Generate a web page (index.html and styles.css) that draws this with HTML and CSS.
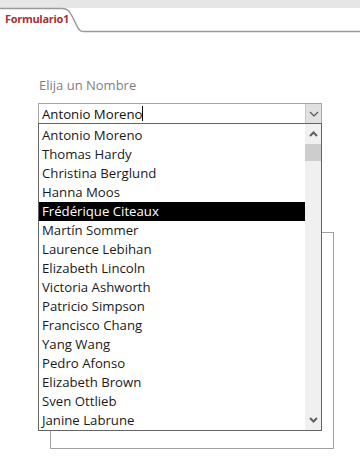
FILE: index.html
```html
<!DOCTYPE html>
<html>
<head>
  <title>Formulario1</title>
  <link rel="stylesheet" href="styles.css">
</head>
<body>
  <div class="tabstrip">
    <svg class="tab-shape" width="360" height="33" viewBox="0 0 360 33">
      <path d="M0 8 H360 V0 H0 Z" fill="#e6e6e6"/>
      <path d="M0 8.5 H62 C68 8.5 70 12 72 16 L78 28 C80 31 81 31.5 84 31.5 H360" fill="none" stroke="#9a9a9a" stroke-width="1.5"/>
    </svg>
    <span class="tab-label">Formulario1</span>
  </div>

  <div class="form">
    <div class="field-label">Elija un Nombre</div>

    <div class="combo">
      <div class="combo-box">
        <span class="combo-text">Antonio Moreno</span><span class="caret"></span>
        <span class="combo-btn">
          <svg width="10" height="6" viewBox="0 0 10 6"><path d="M1 1 L5 5 L9 1" fill="none" stroke="#555" stroke-width="1.2"/></svg>
        </span>
      </div>

      <div class="dropdown">
        <ul class="options">
          <li>Antonio Moreno</li>
          <li>Thomas Hardy</li>
          <li>Christina Berglund</li>
          <li>Hanna Moos</li>
          <li class="selected">Frédérique Citeaux</li>
          <li>Martín Sommer</li>
          <li>Laurence Lebihan</li>
          <li>Elizabeth Lincoln</li>
          <li>Victoria Ashworth</li>
          <li>Patricio Simpson</li>
          <li>Francisco Chang</li>
          <li>Yang Wang</li>
          <li>Pedro Afonso</li>
          <li>Elizabeth Brown</li>
          <li>Sven Ottlieb</li>
          <li>Janine Labrune</li>
        </ul>
        <div class="scrollbar">
          <span class="arrow">
            <svg width="9" height="6" viewBox="0 0 9 6"><path d="M1 5 L4.5 1.5 L8 5" fill="none" stroke="#606060" stroke-width="2"/></svg>
          </span>
          <span class="thumb"></span>
          <span class="track"></span>
          <span class="arrow">
            <svg width="9" height="6" viewBox="0 0 9 6"><path d="M1 1 L4.5 4.5 L8 1" fill="none" stroke="#606060" stroke-width="2"/></svg>
          </span>
        </div>
      </div>
    </div>

    <div class="subform"></div>
  </div>
</body>
</html>
```

FILE: styles.css
```css
body { margin: 0; background: #fff; font-family: "Open Sans", "Noto Sans", sans-serif; color: #222; }

.tabstrip { position: relative; height: 33px; }
.tab-shape { display: block; }
.tab-label { position: absolute; left: 5px; top: 11px; font-size: 11px; font-weight: bold; color: #a8302f; letter-spacing: -0.3px; }

.form { padding: 43px 0 0 38px; }
.field-label { margin-left: 1px; font-size: 13px; color: #7f7f7f; height: 27px; }

.combo { position: relative; width: 284px; }
.combo-box { height: 19px; border: 1px solid #a6a6a6; display: flex; align-items: center; font-size: 13.2px; }
.combo-text { padding-left: 3px; color: #111; }
.caret { width: 1px; height: 15px; background: #000; }
.combo-btn { margin-left: auto; width: 15px; height: 19px; background: #e1e1e1; border-left: 1px solid #c8c8c8; display: flex; align-items: center; justify-content: center; }

.dropdown { position: absolute; left: 0; top: 20px; width: 282px; height: 306px; border: 1px solid #646464; background: #fff; display: flex; z-index: 2; }
.options { list-style: none; margin: 0; padding: 2px 0 0 0; flex: 1; }
.options li { height: 19px; line-height: 19px; padding-left: 3px; font-size: 13.2px; color: #1a1a1a; }
.options li.selected { background: #000; color: #fff; }
.scrollbar { width: 16px; background: #f0f0f0; display: flex; flex-direction: column; }
.arrow { height: 20px; display: flex; align-items: center; justify-content: center; }
.thumb { height: 17px; background: #cdcdcd; }
.track { flex: 1; }

.subform { margin: 108px 0 0 12px; width: 282px; height: 215px; border: 1px solid #a0a0a0; }
```
